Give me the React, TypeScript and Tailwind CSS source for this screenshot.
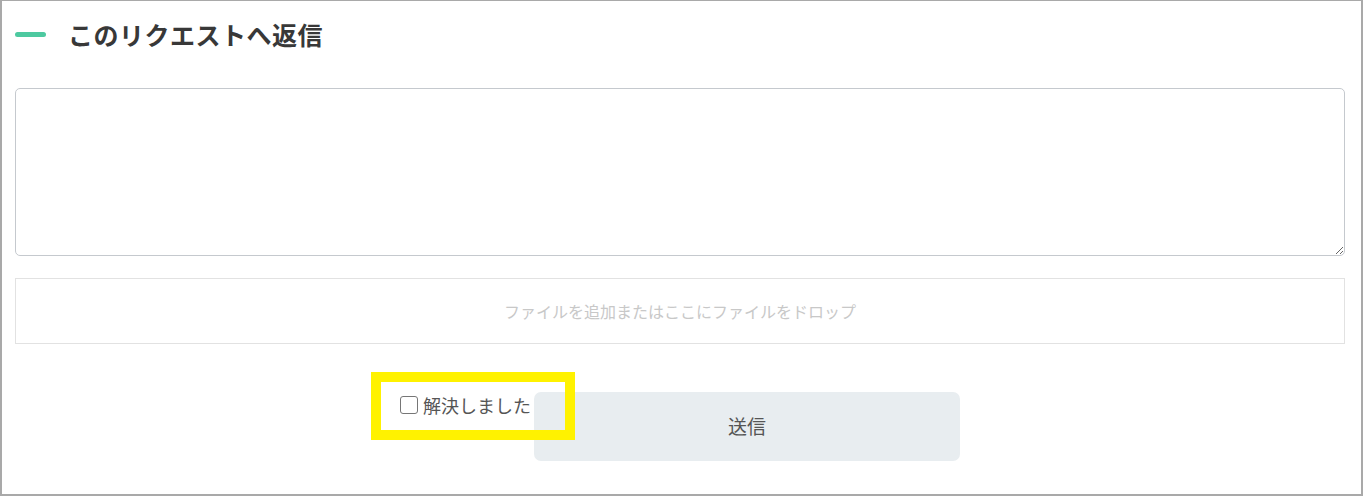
import React from 'react';

const jp = { fontFamily: '"Noto Sans CJK JP", "Noto Sans", sans-serif' };

export default function App() {
  return (
    <div
      className="relative h-[496px] w-[1363px] overflow-hidden border-2 border-t border-[#a9a9a9] bg-white"
      style={jp}
    >
      {/* Heading */}
      <div className="flex h-9 items-center pl-[13px] pr-4 mt-[15px]">
        <span className="h-[5px] w-[31px] rounded-full bg-[#4dc9a0]"></span>
        <h2 className="ml-[22px] text-[25px] font-bold leading-9 tracking-[0.5px] text-[#383838]">
          このリクエストへ返信
        </h2>
      </div>

      <div className="pl-[13px] pr-4 mt-9">
        {/* Reply box */}
        <textarea className="block h-[168px] w-full resize-y rounded-[5px] border border-[#c5c9ce] bg-white p-3 text-base outline-none"></textarea>

        {/* Drop zone */}
        <div className="mt-[22px] flex h-[66px] items-center justify-center border border-[#e2e2e2] text-[16px] text-[#c8c8c8]">
          ファイルを追加またはここにファイルをドロップ
        </div>

        {/* Footer row */}
        <div className="mt-[48px] flex justify-center">
          <label className="flex h-[26px] items-center text-[18px] leading-[26px] text-[#555]">
            <span className="mr-[5px] h-[18px] w-[18px] rounded-[3px] border-[1.5px] border-[#767676] bg-white"></span>
            <span className="w-[111px] overflow-hidden whitespace-nowrap">解決しました</span>
          </label>
          <button className="h-[69px] w-[426px] rounded-[7px] bg-[#e8edf0] text-[19px] text-[#555]">
            送信
          </button>
        </div>
      </div>

      {/* Highlight annotation */}
      <div className="absolute left-[369px] top-[371px] h-[68px] w-[204px] border-[10px] border-[#fff200]"></div>
    </div>
  );
}
